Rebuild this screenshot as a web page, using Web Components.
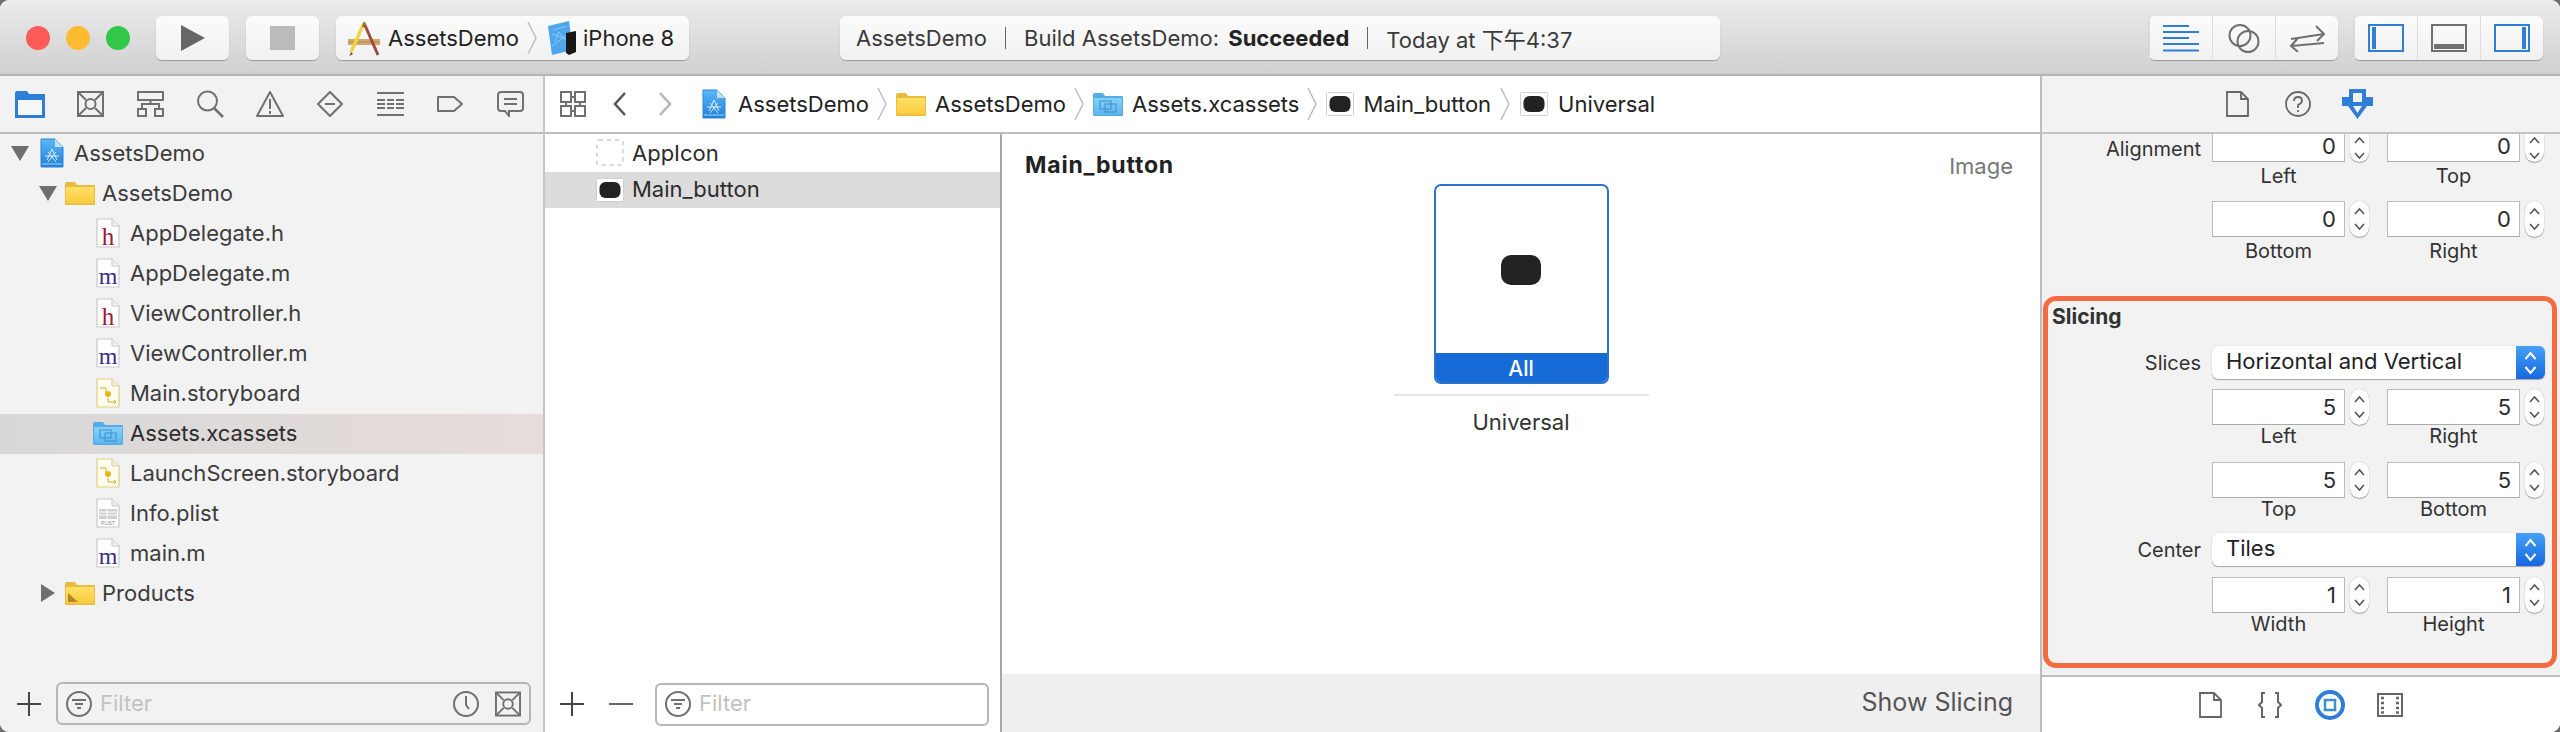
<!DOCTYPE html>
<html><head><meta charset="utf-8"><title>AssetsDemo</title>
<style>
html,body{margin:0;padding:0;width:2560px;height:732px;overflow:hidden;background:#6d6d6d}
body{font-family:Inter,"Noto Sans CJK SC",sans-serif;font-size:22px;color:#333}
</style></head><body>
<x-window>
  <x-toolbar></x-toolbar>
  <x-main>
    <x-navigator>
      <x-tree depth="0" tri="down" icon="project">AssetsDemo</x-tree>
      <x-tree depth="1" tri="down" icon="folder">AssetsDemo</x-tree>
      <x-tree depth="2" icon="fileh">AppDelegate.h</x-tree>
      <x-tree depth="2" icon="filem">AppDelegate.m</x-tree>
      <x-tree depth="2" icon="fileh">ViewController.h</x-tree>
      <x-tree depth="2" icon="filem">ViewController.m</x-tree>
      <x-tree depth="2" icon="story">Main.storyboard</x-tree>
      <x-tree depth="2" icon="bluefolder" selected>Assets.xcassets</x-tree>
      <x-tree depth="2" icon="story">LaunchScreen.storyboard</x-tree>
      <x-tree depth="2" icon="plist">Info.plist</x-tree>
      <x-tree depth="2" icon="filem">main.m</x-tree>
      <x-tree depth="1" tri="right" icon="products">Products</x-tree>
    </x-navigator>
    <x-center></x-center>
    <x-inspector></x-inspector>
  </x-main>
</x-window>
<script>
const C={blue:'#2f7fd9',g:'#707070'};
const pageBase=(extra='',edge='#c9c9c9',fill='#fff')=>`<svg width="24" height="30" viewBox="0 0 24 30"><path d="M1 1H16L23 8V29H1Z" fill="${fill}" stroke="${edge}" stroke-width="1.200"/><path d="M16 1V8H23" fill="#f0f0f0" stroke="${edge}"/>${extra}</svg>`;
const folder=(a,b,e,extra='')=>`<svg width="30" height="24" viewBox="0 0 30 24"><path d="M0 3Q0 1 2 1H10L12 4H29Q30 4 30 5V23Q30 24 29 24H1Q0 24 0 23Z" fill="${e}"/><path d="M1 6H29V22.500H1Z" fill="url(#${a})"/><defs><linearGradient id="${a}" x1="0" y1="0" x2="0" y2="1"><stop offset="0" stop-color="${b[0]}"/><stop offset="1" stop-color="${b[1]}"/></linearGradient></defs>${extra}</svg>`;
const thumb=`<svg width="28" height="24" viewBox="0 0 28 24"><rect x=".5" y=".5" width="27" height="23" rx="1" fill="#fff" stroke="#cfcfcf"/><rect x="3.500" y="4" width="21" height="16" rx="6" fill="#222"/></svg>`;
const appdoc=(w=24,h=30)=>`<svg width="${w}" height="${h}" viewBox="0 0 24 30"><defs><linearGradient id="ad" x1="0" y1="0" x2="0" y2="1"><stop offset="0" stop-color="#5db8f5"/><stop offset="1" stop-color="#1f7fdc"/></linearGradient></defs><path d="M1 1H15L23 9V29H1Z" fill="url(#ad)" stroke="#2a86d8"/><path d="M15 1V9H23" fill="#bfe0fa"/><path d="M7 22L12 11L17 22M5 18H19M8 14L16 24M16 14L8 24" fill="none" stroke="#d6ecfc" stroke-width="1"/><path d="M2 26H22" stroke="#a8d6f8"/></svg>`;
const storyExtra=`<path d="M4 10H10V16" fill="none" stroke="#d9a92c"/><circle cx="12" cy="16" r="3" fill="#eeb11e"/><path d="M12 20V24H20M18 22L20 24L18 26" fill="none" stroke="#d9a92c"/>`;
const I={
 play:`<svg width="24" height="26" viewBox="0 0 24 26"><path d="M0 0L24 13L0 26Z" fill="#666"/></svg>`,
 stop:`<svg width="25" height="24"><rect width="25" height="24" fill="#bbb"/></svg>`,
 hammer:`<svg width="32" height="36" viewBox="0 0 32 36"><path d="M0 19H32V25H0Z" fill="#d3a871"/><path d="M0 22H32" stroke="#b98a52"/><path d="M16 3L30 35" stroke="#9c4a3a" stroke-width="3" fill="none"/><path d="M16 3L3 32" stroke="#efd544" stroke-width="3.500" fill="none"/><path d="M3 32L1.500 36L5 34Z" fill="#555"/><path d="M16 1L19 7L14 7Z" fill="#8a6a4a"/></svg>`,
 iphone:`<svg width="30" height="36" viewBox="0 0 30 36"><path d="M1 6L22 1L26 30L5 35Z" fill="#4ea6ec"/><path d="M6 10L20 6M8 22L12 12L18 20M5 14L24 20M5 26L24 12" stroke="#8cc8f5" fill="none"/><path d="M19 13L29 11L29 32L22 35L19 33Z" fill="#161616"/></svg>`,
 doc:`<svg width="23" height="26" viewBox="0 0 23 26"><path d="M1 1H15L22 8V25H1Z" fill="none" stroke="#666" stroke-width="1.800"/><path d="M15 1V8H22" fill="none" stroke="#666" stroke-width="1.800"/></svg>`,
 lines:`<svg width="36" height="27" viewBox="0 0 36 27">${[[1,26],[7,36],[13,26],[19,36],[25.500,36]].map(a=>`<rect x="0" y="${a[0]-1}" width="${a[1]}" height="2" fill="${C.blue}"/>`).join('')}</svg>`,
 venn:`<svg width="32" height="29" viewBox="0 0 32 29"><circle cx="12" cy="11.500" r="10.500" fill="none" stroke="${C.g}" stroke-width="2"/><circle cx="20" cy="17.500" r="10.500" fill="none" stroke="${C.g}" stroke-width="2"/></svg>`,
 arrows:`<svg width="37" height="27" viewBox="0 0 37 27"><path d="M2 14L35 9M27 1L35 9L28 16M35 18L2 21M9 13L2 21L9 27" fill="none" stroke="${C.g}" stroke-width="2"/></svg>`,
 pl:`<svg width="36" height="28"><rect x="1" y="1" width="34" height="26" fill="none" stroke="${C.blue}" stroke-width="2"/><rect x="4" y="3" width="4" height="22" fill="${C.blue}"/></svg>`,
 pb:`<svg width="36" height="28"><rect x="1" y="1" width="34" height="26" fill="none" stroke="${C.g}" stroke-width="2"/><rect x="3" y="20" width="30" height="5" fill="${C.g}"/></svg>`,
 pr:`<svg width="36" height="28"><rect x="1" y="1" width="34" height="26" fill="none" stroke="${C.blue}" stroke-width="2"/><rect x="28" y="3" width="4" height="22" fill="${C.blue}"/></svg>`,
 navfolder:`<svg width="30" height="27" viewBox="0 0 30 27"><path d="M0 2Q0 0 2 0H12L14 3H30V27H0Z" fill="${C.blue}"/><rect x="3" y="9" width="24" height="15" fill="#f6f7f8"/></svg>`,
 xbox:`<svg width="27" height="26" viewBox="0 0 27 26"><rect x="1" y="1" width="25" height="24" fill="none" stroke="${C.g}" stroke-width="2"/><circle cx="13.500" cy="13" r="5" fill="none" stroke="${C.g}" stroke-width="2"/><path d="M2 2L9 9M25 2L18 9M2 24L9 17M25 24L18 17" stroke="${C.g}" stroke-width="2"/></svg>`,
 hier:`<svg width="27" height="26" viewBox="0 0 27 26"><rect x="1" y="1" width="25" height="8" fill="none" stroke="${C.g}" stroke-width="2"/><rect x="1" y="18" width="8" height="7" fill="none" stroke="${C.g}" stroke-width="2"/><rect x="18" y="18" width="8" height="7" fill="none" stroke="${C.g}" stroke-width="2"/><path d="M5 18V13H22V18M13.500 9V13" fill="none" stroke="${C.g}" stroke-width="2"/></svg>`,
 search:`<svg width="27" height="28" viewBox="0 0 27 28"><circle cx="10.500" cy="11" r="9.500" fill="none" stroke="${C.g}" stroke-width="2"/><path d="M17 18L26 27" stroke="${C.g}" stroke-width="2.500"/></svg>`,
 warn:`<svg width="28" height="26" viewBox="0 0 28 26"><path d="M14 1L27 25H1Z" fill="none" stroke="${C.g}" stroke-width="2" stroke-linejoin="round"/><path d="M14 8V18M14 20V23" stroke="${C.g}" stroke-width="2"/></svg>`,
 diamond:`<svg width="28" height="26" viewBox="0 0 28 26"><path d="M14 1L26 13L14 25L2 13Z" fill="none" stroke="${C.g}" stroke-width="2" stroke-linejoin="round"/><path d="M9 13H19" stroke="${C.g}" stroke-width="2"/></svg>`,
 list:`<svg width="27" height="25" viewBox="0 0 27 25"><path d="M0 1H27M0 8H27M0 12H27M0 16H27M0 23H27" stroke="${C.g}" stroke-width="2"/><path d="M9 7V17M18 7V17" stroke="#f4f4f4" stroke-width="2"/></svg>`,
 tag:`<svg width="26" height="16" viewBox="0 0 26 16"><path d="M1 1H17L25 8L17 15H1Z" fill="none" stroke="${C.g}" stroke-width="2" stroke-linejoin="round"/></svg>`,
 bubble:`<svg width="27" height="26" viewBox="0 0 27 26"><path d="M4 1H23Q26 1 26 4V17Q26 20 23 20H12V25L8 20H4Q1 20 1 17V4Q1 1 4 1Z" fill="none" stroke="${C.g}" stroke-width="2"/><path d="M7 8H20M7 13H20" stroke="${C.g}" stroke-width="2"/></svg>`,
 grid:`<svg width="26" height="26" viewBox="0 0 26 26"><path d="M1 1H11V11H1ZM15 1H25V11H15ZM1 15H11V25H1ZM15 15H25V25H15ZM6 11V15M20 11V15M11 20H15M11 6H15" fill="none" stroke="${C.g}" stroke-width="2"/></svg>`,
 back:`<svg width="14" height="24" viewBox="0 0 14 24"><path d="M12 1L2 12L12 23" fill="none" stroke="#555" stroke-width="2.500"/></svg>`,
 fwd:`<svg width="14" height="24" viewBox="0 0 14 24"><path d="M2 1L12 12L2 23" fill="none" stroke="#b5b5b5" stroke-width="2.500"/></svg>`,
 chev:`<svg width="11" height="34" viewBox="0 0 11 34"><path d="M1 1L9 17L1 33" fill="none" stroke="#bdbdbd" stroke-width="1.500"/></svg>`,
 project:appdoc(),
 folder:folder('gy',['#ffe067','#fbcb3c'],'#e9bb3f'),
 products:folder('gp',['#ffe067','#fbcb3c'],'#e9bb3f','<path d="M3 21V12L13 21Z" fill="#b5852a"/>'),
 bluefolder:folder('gb',['#86d0f7','#5cb8ee'],'#52ace6','<rect x="7" y="9" width="11" height="8" fill="none" stroke="#3e8fc8"/><rect x="12" y="12" width="11" height="8" fill="none" stroke="#3e8fc8"/>'),
 minifolder:folder('gy2',['#ffe067','#fbcb3c'],'#e9bb3f'),
 miniblue:folder('gb2',['#86d0f7','#5cb8ee'],'#52ace6','<rect x="7" y="9" width="11" height="8" fill="none" stroke="#3e8fc8"/><rect x="12" y="12" width="11" height="8" fill="none" stroke="#3e8fc8"/>'),
 fileh:pageBase(`<text x="12" y="26.500" text-anchor="middle" font-family="Liberation Serif" font-size="25" fill="#a0183c">h</text>`),
 filem:pageBase(`<text x="12" y="26" text-anchor="middle" font-family="Liberation Serif" font-size="24" fill="#3b2a85">m</text>`),
 story:pageBase(storyExtra,'#e2cf80','#fffdf0'),
 plist:pageBase(`<path d="M3 11H21V21H3Z" fill="#cfcfcf"/><path d="M3 14H21M3 17H21M11 11V21" stroke="#fff"/><text x="12" y="27" text-anchor="middle" font-family="Liberation Sans" font-size="5" fill="#888">PLIST</text>`),
 thumb,
 appicon:`<svg width="28" height="27"><rect x="1" y="1" width="26" height="25" rx="2" fill="none" stroke="#cdcdcd" stroke-width="1.500" stroke-dasharray="4 4"/></svg>`,
 filt:`<svg width="26" height="26" viewBox="0 0 26 26"><circle cx="13" cy="13" r="12" fill="none" stroke="#707070" stroke-width="2"/><path d="M6 9H20M9 13H17M11 17H15" stroke="#707070" stroke-width="2"/></svg>`,
 clock:`<svg width="26" height="26" viewBox="0 0 26 26"><circle cx="13" cy="13" r="12" fill="none" stroke="#707070" stroke-width="2"/><path d="M13 5V14L16 18" fill="none" stroke="#707070" stroke-width="2"/></svg>`,
 xsmall:`<svg width="26" height="26" viewBox="0 0 27 26"><rect x="1" y="1" width="25" height="24" fill="none" stroke="#707070" stroke-width="2"/><circle cx="13.500" cy="13" r="5" fill="none" stroke="#707070" stroke-width="2"/><path d="M2 2L9 9M25 2L18 9M2 24L9 17M25 24L18 17" stroke="#707070" stroke-width="2"/></svg>`,
 plus:`<svg width="24" height="24"><path d="M12 0V24M0 12H24" stroke="#444" stroke-width="2"/></svg>`,
 minus:`<svg width="24" height="24"><path d="M0 12H24" stroke="#666" stroke-width="2"/></svg>`,
 help:`<svg width="26" height="26" viewBox="0 0 26 26"><circle cx="13" cy="13" r="12" fill="none" stroke="#666" stroke-width="1.800"/><path d="M9 10Q9 6 13 6Q17 6 17 10Q17 12 13 14V17M13 19V21" fill="none" stroke="#666" stroke-width="1.800"/></svg>`,
 attr:`<svg width="31" height="30" viewBox="0 0 31 30"><path d="M7 0H24V8H31V17H25L15.500 30L6 17H0V8H7Z" fill="${C.blue}"/><path d="M11 4H20V13H11Z" fill="#f2f2f2"/><path d="M11 17H20L15.500 24Z" fill="#f2f2f2"/></svg>`,
 braces:`<svg width="24" height="26" viewBox="0 0 24 26"><path d="M7 1H4V10L1 13L4 16V25H7M17 1H20V10L23 13L20 16V25H17" fill="none" stroke="#666" stroke-width="2"/></svg>`,
 target:`<svg width="30" height="30" viewBox="0 0 30 30"><circle cx="15" cy="15" r="13" fill="none" stroke="${C.blue}" stroke-width="4"/><rect x="10" y="10" width="10" height="10" fill="none" stroke="#3f8fc9" stroke-width="2.500"/></svg>`,
 film:`<svg width="26" height="24" viewBox="0 0 26 24"><rect x="1" y="1" width="24" height="22" fill="none" stroke="#666" stroke-width="2"/><path d="M4 5H7M4 10H7M4 15H7M4 19.500H7M19 5H22M19 10H22M19 15H22M19 19.500H22" stroke="#666" stroke-width="2.500"/></svg>`,
 ud:`<svg width="13" height="26" viewBox="0 0 13 26"><path d="M1.500 9L6.500 3L11.500 9M1.500 17L6.500 23L11.500 17" fill="none" stroke="#fff" stroke-width="2"/></svg>`,
 sud:`<svg width="11" height="26" viewBox="0 0 11 26"><path d="M1 8L5.500 3L10 8M1 18L5.500 23L10 18" fill="none" stroke="#555" stroke-width="1.600"/></svg>`
};
const def=(tag,render)=>customElements.define(tag,class extends HTMLElement{
  constructor(){super();this.attachShadow({mode:'open'})}
  connectedCallback(){this.shadowRoot.innerHTML=render(this)}
});
def('x-icon',e=>`<style>:host{display:inline-flex;align-items:center;justify-content:center;flex:none;line-height:0}</style>${I[e.getAttribute('name')]}`);
def('x-window',()=>`<style>:host{display:flex;flex-direction:column;width:2560px;height:732px;border-radius:9px;overflow:hidden;background:#fff}</style><slot></slot>`);
def('x-main',()=>`<style>:host{display:flex;height:656px;min-height:0}</style><slot></slot>`);
def('x-btn',e=>`<style>:host{display:flex;align-items:center;height:44px;border-radius:6px;background:linear-gradient(#fbfbfb,#f1f1f1);box-shadow:0 1px 1px rgba(0,0,0,.28);flex:none;box-sizing:border-box}</style><slot></slot>`);
def('x-seg',e=>`<style>:host{display:flex;height:44px;border-radius:6px;background:linear-gradient(#fbfbfb,#f1f1f1);box-shadow:0 1px 1px rgba(0,0,0,.28);flex:none}
 div{width:63px;height:100%;display:flex;align-items:center;justify-content:center;border-left:1px solid #dcdcdc;box-sizing:border-box}div:first-child{border:0;width:63px}</style>
 ${e.getAttribute('icons').split(' ').map(n=>`<div><x-icon name="${n}"></x-icon></div>`).join('')}`);
def('x-toolbar',()=>`<style>
 :host{display:flex;align-items:center;height:76px;box-sizing:border-box;padding:2px 0 0 26px;background:linear-gradient(#ebebeb,#d0d0d0);border-bottom:2px solid #b5b5b5;flex:none;color:#222}
 i{width:24px;height:24px;border-radius:50%;margin-right:16px;flex:none}
 .st{width:880px;margin-left:151px;padding-left:16px;color:#3a3a3a;gap:18px}
 .st u{width:1px;height:22px;background:#666;flex:none;text-decoration:none}
 .sch{width:353px;margin-left:17px;padding-left:12px}
 .t{white-space:nowrap} b{font-weight:700;color:#222;margin-left:3px}
 </style>
 <i style="background:#fc5b57"></i><i style="background:#fdbb2f"></i><i style="background:#33c748"></i>
 <x-btn style="width:73px;margin-left:10px;justify-content:center"><x-icon name="play"></x-icon></x-btn>
 <x-btn style="width:73px;margin-left:17px;justify-content:center"><x-icon name="stop"></x-icon></x-btn>
 <x-btn class="sch"><x-icon name="hammer"></x-icon><span class="t" style="margin-left:8px">AssetsDemo</span><x-icon name="chev" style="margin:0 9px 0 8px"></x-icon><x-icon name="iphone"></x-icon><span class="t" style="margin-left:6px">iPhone 8</span></x-btn>
 <x-btn class="st"><span class="t">AssetsDemo</span><u></u><span class="t">Build AssetsDemo: <b>Succeeded</b></span><u></u><span class="t">Today at 下午4:37</span></x-btn>
 <x-seg style="margin-left:429px" icons="lines venn arrows"></x-seg>
 <x-seg style="margin-left:16px" icons="pl pb pr"></x-seg>`);
def('x-tabs',e=>`<style>:host{display:flex;align-items:center;justify-content:center;flex:none;box-sizing:border-box}
 div{display:flex;justify-content:center;align-items:center;flex:none}</style>
 ${e.getAttribute('icons').split(' ').map(n=>`<div style="width:${e.getAttribute('step')}px"><x-icon name="${n}"></x-icon></div>`).join('')}`);
def('x-tree',e=>{const d=+e.getAttribute('depth'),t=e.getAttribute('tri');
 const tri=t==='down'?`<svg width="18" height="16"><path d="M0 1H18L9 16Z" fill="#6f6f6f"/></svg>`:t==='right'?`<svg width="18" height="18"><path d="M2 0L16 9L2 18Z" fill="#6f6f6f"/></svg>`:'';
 return `<style>:host{display:flex;align-items:center;height:40px;flex:none;padding:0 0 2px ${11+28*d}px;box-sizing:border-box;color:#3c3c3c;${e.hasAttribute('selected')?'background:linear-gradient(90deg,#d8d8d8,#e6dcda);color:#2c2c2c;':''}}
 .t{width:18px;display:flex;justify-content:center;flex:none}.c{width:30px;margin:0 7px 0 8px;display:flex;justify-content:center;flex:none}
 </style><span class="t">${tri}</span><span class="c"><x-icon name="${e.getAttribute('icon')}"></x-icon></span><slot></slot>`});
def('x-filter',e=>`<style>:host{display:flex;align-items:center;height:43px;box-sizing:border-box;border:2px solid #b6b6b6;border-radius:6px;padding:0 8px;flex:none;background:${e.getAttribute('bg')||'transparent'};gap:8px}
 span{color:#c2c2c2;flex:1;padding-bottom:2px}</style><x-icon name="filt"></x-icon><span>Filter</span><slot></slot>`);
def('x-navigator',()=>`<style>:host{display:flex;flex-direction:column;width:545px;border-right:2px solid #c6c6c6;box-sizing:border-box;background:#f2f2f2;flex:none}
 x-tabs{height:58px;border-bottom:2px solid #bcbcbc;justify-content:flex-start}
 .list{flex:1;display:flex;flex-direction:column}
 .foot{display:flex;align-items:center;height:43px;margin-bottom:7px;padding-left:17px;gap:15px}
 x-filter{width:475px}
 </style><x-tabs icons="navfolder xbox hier search warn diamond list tag bubble" step="60"></x-tabs><div class="list"><slot></slot></div>
 <div class="foot"><x-icon name="plus"></x-icon><x-filter><x-icon name="clock"></x-icon><x-icon name="xsmall" style="margin-left:8px"></x-icon></x-filter></div>`);
def('x-path',()=>`<style>:host{display:flex;align-items:center;height:58px;box-sizing:border-box;border-bottom:2px solid #bcbcbc;flex:none;color:#222;white-space:nowrap;padding-left:15px;background:#fff}
 x-icon{margin:0}</style>
 <x-icon name="grid"></x-icon><x-icon name="back" style="margin-left:27px"></x-icon><x-icon name="fwd" style="margin-left:31px"></x-icon>
 <x-icon name="project" style="margin-left:30px"></x-icon><span style="margin-left:12px">AssetsDemo</span><x-icon name="chev" style="margin:0 8px"></x-icon>
 <x-icon name="minifolder"></x-icon><span style="margin-left:9px">AssetsDemo</span><x-icon name="chev" style="margin:0 8px"></x-icon>
 <x-icon name="miniblue"></x-icon><span style="margin-left:9px">Assets.xcassets</span><x-icon name="chev" style="margin:0 8px"></x-icon>
 <x-icon name="thumb"></x-icon><span style="margin-left:9px">Main_button</span><x-icon name="chev" style="margin:0 9px"></x-icon>
 <x-icon name="thumb"></x-icon><span style="margin-left:10px">Universal</span>`);
def('x-asset',e=>`<style>:host{display:flex;align-items:center;height:36px;padding-left:51px;box-sizing:border-box;color:#2c2c2c;gap:8px;${e.hasAttribute('selected')?'background:#dcdcdc;':''}}
 span{padding-bottom:3px}</style><x-icon name="${e.getAttribute('icon')}" style="${e.getAttribute('icon')==='appicon'?'margin-bottom:4px':''}"></x-icon><span><slot></slot></span>`);
def('x-center',()=>`<style>:host{display:flex;flex-direction:column;width:1497px;border-right:2px solid #bdbdbd;box-sizing:border-box;flex:none;background:#fff}
 .row{display:flex;flex:1;min-height:0}
 .assets{width:457px;border-right:2px solid #a8a8a8;box-sizing:border-box;display:flex;flex-direction:column;padding-top:2px;flex:none}
 .assets .sp{flex:1}
 .foot{display:flex;align-items:center;height:42px;margin-bottom:7px;padding-left:15px;gap:25px}
 .foot x-filter{width:334px;margin-left:-3px}
 .ed{flex:1;display:flex;flex-direction:column;align-items:center;min-width:0}
 .hd{align-self:stretch;height:50px;display:flex;justify-content:space-between;align-items:flex-start;padding:19px 27px 0 23px;box-sizing:border-box;line-height:24px}
 .hd b{color:#222;font-weight:700;font-size:23px;letter-spacing:.8px}.hd span{color:#777;padding-top:1px}
 .card{width:175px;height:200px;border:2px solid #2a73c9;border-radius:7px;box-sizing:border-box;display:flex;flex-direction:column;overflow:hidden;flex:none}
 .im{flex:1;display:flex;align-items:center;justify-content:center}
 .im i{display:block;width:40px;height:30px;border-radius:10px;background:#232323}
 .all{height:29px;background:#176bd6;color:#fff;text-align:center;line-height:32px;font-weight:500;font-size:21px}
 .sep{width:255px;height:2px;background:#e6e6e6;margin-top:10px;flex:none}
 .uni{margin-top:13px;line-height:26px;color:#333}
 .bar{margin-top:auto;align-self:stretch;height:58px;background:#efefef;display:flex;align-items:center;justify-content:flex-end;padding:0 27px 3px 0;box-sizing:border-box;color:#555;font-size:25px}
 </style>
 <x-path></x-path>
 <div class="row">
  <div class="assets"><x-asset icon="appicon">AppIcon</x-asset><x-asset icon="thumb" selected>Main_button</x-asset><div class="sp"></div>
   <div class="foot"><x-icon name="plus"></x-icon><x-icon name="minus"></x-icon><x-filter bg="#fff"></x-filter></div></div>
  <div class="ed"><div class="hd"><b>Main_button</b><span>Image</span></div>
   <div class="card"><div class="im"><i></i></div><div class="all">All</div></div>
   <div class="sep"></div><div class="uni">Universal</div>
   <div class="bar">Show Slicing</div></div>
 </div>`);
def('x-num',e=>{const cut=e.hasAttribute('cut'),h=cut?28:36;return `<style>:host{display:flex;gap:5px;flex:none;width:157px;height:${h}px}
 .f{width:133px;height:${h}px;background:#fff;border:1px solid #bcbcbc;${cut?'border-top:0;':''}border-bottom-color:#aaa;box-sizing:border-box;text-align:right;padding-right:8px;line-height:${cut?24:34}px;color:#2a2a2a;font-size:22px}
 .s{width:19px;height:${h}px;background:#fff;border-radius:${cut?'0 0 10px 10px':'10px'};box-shadow:0 1px 1px rgba(0,0,0,.3),0 0 1px rgba(0,0,0,.3);display:flex;align-items:center;justify-content:center}
 </style><div class="f">${e.getAttribute('v')}</div><div class="s"><x-icon name="sud"></x-icon></div>`});
def('x-pair',e=>{const cut=e.hasAttribute('cut')?'cut':'';return `<style>:host{display:block}
 .r{display:flex;gap:18px}.l{display:flex;gap:18px;line-height:22px;color:#333;font-size:20px}
 .l span{width:157px;padding-right:24px;box-sizing:border-box;text-align:center}
 </style><div class="r"><x-num ${cut} v="${e.getAttribute('a')}"></x-num><x-num ${cut} v="${e.getAttribute('b')}"></x-num></div>
 <div class="l" style="height:${e.getAttribute('lh')||24}px;padding-top:${e.getAttribute('lt')||0}px;box-sizing:border-box"><span>${e.getAttribute('la')}</span><span>${e.getAttribute('lb')}</span></div>`});
def('x-popup',e=>`<style>:host{display:flex;width:333px;height:33px;border-radius:6px;background:#fff;box-shadow:0 1px 1px rgba(0,0,0,.3),0 0 1px rgba(0,0,0,.25);overflow:hidden;flex:none;color:#222;line-height:31px}
 .t{flex:1;padding-left:14px}.b{width:29px;background:linear-gradient(#45a0f8,#1768df);display:flex;align-items:center;justify-content:center}
 </style><div class="t"><slot></slot></div><div class="b"><x-icon name="ud"></x-icon></div>`);
def('x-lrow',e=>`<style>:host{display:flex;align-items:center;gap:11px}
 span{width:${e.getAttribute('w')}px;text-align:right;flex:none;color:#333;white-space:nowrap;font-size:20px}</style><span>${e.getAttribute('label')}</span><slot></slot>`);
def('x-slicing',()=>`<style>:host{display:block;width:514px;height:372px;box-sizing:border-box;border:5px solid #f56c42;border-radius:13px;margin:29px 0 0 1px;background:#f2f2f2;padding:4px 0 0 4px}
 .h{font-weight:700;color:#333;line-height:24px;font-size:21px}
 .i{margin-left:160px}
 </style><div class="h">Slicing</div>
 <x-lrow label="Slices" w="149" style="margin-top:17px"><x-popup>Horizontal and Vertical</x-popup></x-lrow>
 <x-pair class="i" style="margin-top:10px" a="5" b="5" la="Left" lb="Right"></x-pair>
 <x-pair class="i" style="margin-top:13px" a="5" b="5" la="Top" lb="Bottom"></x-pair>
 <x-lrow label="Center" w="149" style="margin-top:11px"><x-popup>Tiles</x-popup></x-lrow>
 <x-pair class="i" style="margin-top:11px" a="1" b="1" la="Width" lb="Height"></x-pair>`);
def('x-inspector',()=>`<style>:host{display:flex;flex-direction:column;flex:1;min-width:0;background:#f2f2f2}
 x-tabs.top{height:58px;border-bottom:2px solid #c4c4c4;padding-right:7px}
 .c{flex:1;min-height:0;display:flex;flex-direction:column}
 .al{display:flex;gap:11px;height:133px;flex:none}
 .al .lb{width:159px;text-align:right;color:#333;padding-top:3px;line-height:24px;flex:none;font-size:20px}
 x-tabs.bot{height:57px;border-top:2px solid #bdbdbd;background:#fff;padding-right:2px}
 .st{display:flex;flex-direction:column}
 </style>
 <x-tabs class="top" icons="doc help attr" step="60"></x-tabs>
 <div class="c"><div class="al"><span class="lb">Alignment</span><div class="st">
   <x-pair cut a="0" b="0" la="Left" lb="Top" lh="39" lt="3"></x-pair><x-pair a="0" b="0" la="Bottom" lb="Right" lh="30" lt="3"></x-pair></div></div>
  <x-slicing></x-slicing></div>
 <x-tabs class="bot" icons="doc braces target film" step="60"></x-tabs>`);
</script>
</body></html>
